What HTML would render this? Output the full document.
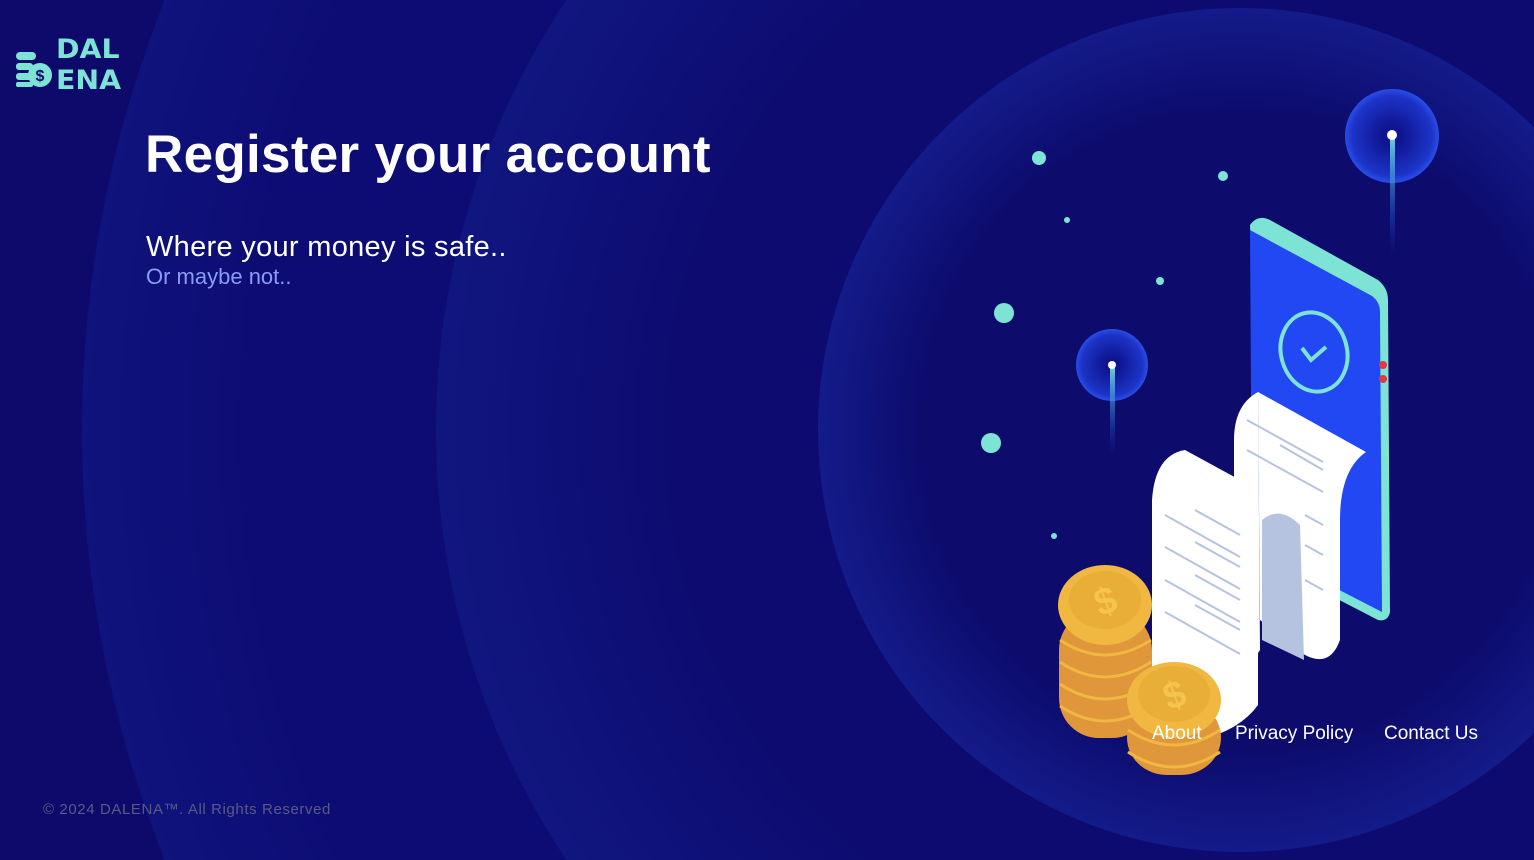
<!DOCTYPE html>
<html><head><meta charset="utf-8"><style>
html,body{margin:0;padding:0;width:1534px;height:860px;overflow:hidden;background:#0d0a6c;font-family:"Liberation Sans",sans-serif}
.a{position:absolute;white-space:nowrap}
</style></head><body>
<svg class="a" style="left:0;top:0" width="1534" height="860">
<defs>
<radialGradient id="g1" cx="1240" cy="430" r="1160" gradientUnits="userSpaceOnUse"><stop offset="0.85" stop-color="#0d0c74"/><stop offset="1" stop-color="#0f137c"/></radialGradient>
<radialGradient id="g2" cx="1220" cy="430" r="785" gradientUnits="userSpaceOnUse"><stop offset="0.7" stop-color="#0d0b70"/><stop offset="1" stop-color="#101680"/></radialGradient>
<radialGradient id="g3" cx="1240" cy="430" r="422" gradientUnits="userSpaceOnUse"><stop offset="0.75" stop-color="#0d0b6c"/><stop offset="1" stop-color="#131b8a"/></radialGradient>
<radialGradient id="gl" cx="0.5" cy="0.5" r="0.5"><stop offset="0.2" stop-color="#0f1590"/><stop offset="0.85" stop-color="#1c34c8"/><stop offset="1" stop-color="#2a4ee8"/></radialGradient>
<linearGradient id="bm" x1="0" y1="0" x2="0" y2="1"><stop offset="0" stop-color="#6fd0e8"/><stop offset="1" stop-color="#1a3ad0" stop-opacity="0"/></linearGradient>
</defs>
<circle cx="1240" cy="430" r="1158" fill="url(#g1)"/>
<circle cx="1210" cy="430" r="774" fill="url(#g2)"/>
<circle cx="1240" cy="430" r="422" fill="url(#g3)"/>
<g fill="#7de3d4"><circle cx="1039" cy="158" r="7"/><circle cx="1223" cy="176" r="5"/><circle cx="1067" cy="220" r="3"/><circle cx="1160" cy="281" r="4"/><circle cx="1004" cy="313" r="10"/><circle cx="991" cy="443" r="10"/><circle cx="1054" cy="536" r="3"/></g>
<circle cx="1392" cy="136" r="47" fill="url(#gl)"/>
<rect x="1390" y="136" width="5" height="120" fill="url(#bm)"/><circle cx="1392" cy="135" r="5" fill="#fff"/>
<circle cx="1112" cy="365" r="36" fill="url(#gl)"/>
<rect x="1110" y="366" width="5" height="90" fill="url(#bm)"/><circle cx="1112" cy="365" r="4" fill="#fff"/>
<path d="M1250 225 Q1258 214 1270 220 L1378 280 Q1388 288 1388 300 L1390 612 Q1388 622 1378 620 L1262 560 Z" fill="#7de3d4"/>
<path d="M1250 230 L1372 296 Q1380 302 1380 312 L1382 612 L1252 545 Z" fill="#2248f4"/>
<circle cx="1383" cy="365" r="4" fill="#e03a3a"/><circle cx="1383" cy="379" r="4" fill="#e03a3a"/>
<ellipse cx="1314" cy="352" rx="33" ry="40" transform="rotate(-15 1314 352)" fill="none" stroke="#7de3d4" stroke-width="4"/>
<path d="M1302 348 L1311 360 L1326 347" fill="none" stroke="#7de3d4" stroke-width="4"/>
<path d="M1258 392 L1366 452 Q1340 470 1340 520 L1340 640 Q1330 668 1305 655 L1260 620 Z" fill="#fff"/>
<path d="M1258 392 Q1234 405 1234 440 L1234 690 L1260 650 Z" fill="#fff"/>
<path d="M1262 520 Q1280 505 1300 525 L1304 660 L1262 640 Z" fill="#b6c3e0"/>
<path d="M1185 450 L1240 480 L1258 520 L1258 705 Q1240 730 1200 740 L1152 720 L1152 500 Q1155 455 1185 450 Z" fill="#fff"/>
<g stroke="#b6c3e0" stroke-width="2">
<line x1="1165" y1="515" x2="1240" y2="557"/><line x1="1195" y1="510" x2="1240" y2="535"/>
<line x1="1165" y1="547" x2="1240" y2="589"/><line x1="1195" y1="542" x2="1240" y2="567"/>
<line x1="1165" y1="580" x2="1240" y2="622"/><line x1="1195" y1="575" x2="1240" y2="600"/>
<line x1="1165" y1="612" x2="1240" y2="654"/><line x1="1195" y1="605" x2="1240" y2="630"/>
<line x1="1247" y1="420" x2="1323" y2="462"/><line x1="1280" y1="445" x2="1323" y2="470"/>
<line x1="1247" y1="450" x2="1323" y2="492"/><line x1="1305" y1="515" x2="1323" y2="525"/>
<line x1="1305" y1="545" x2="1323" y2="555"/><line x1="1305" y1="580" x2="1323" y2="590"/>
</g>
<g>
<rect x="1059" y="610" width="93" height="128" rx="40" fill="#e0963a"/>
<g fill="none" stroke="#f0b840" stroke-width="3"><path d="M1060 640 Q1105 670 1151 640"/><path d="M1060 662 Q1105 692 1151 662"/><path d="M1060 684 Q1105 714 1151 684"/><path d="M1060 706 Q1105 736 1151 706"/></g>
<ellipse cx="1105" cy="605" rx="47" ry="40" fill="#f0b840"/><ellipse cx="1105" cy="600" rx="36" ry="29" fill="#e8ae38"/>
<text x="1105" y="614" font-size="38" font-weight="bold" fill="#f4c44c" text-anchor="middle" transform="rotate(-20 1105 600)">$</text>
<rect x="1127" y="700" width="94" height="75" rx="40" fill="#e0963a"/>
<g fill="none" stroke="#f0b840" stroke-width="3"><path d="M1128 730 Q1174 760 1220 730"/><path d="M1128 752 Q1174 782 1220 752"/></g>
<ellipse cx="1174" cy="700" rx="47" ry="38" fill="#f0b840"/><ellipse cx="1174" cy="694" rx="36" ry="28" fill="#e8ae38"/>
<text x="1174" y="708" font-size="38" font-weight="bold" fill="#f4c44c" text-anchor="middle" transform="rotate(-20 1174 694)">$</text>
</g>
<g fill="#7de3d4"><rect x="16" y="52" width="20" height="8" rx="4"/><rect x="16" y="63" width="17" height="7" rx="3"/><rect x="16" y="73" width="17" height="7" rx="3"/><rect x="16" y="82" width="17" height="5" rx="2"/><circle cx="40" cy="75" r="12"/></g>
<text x="40" y="81" font-size="16" font-weight="bold" fill="#0d0a6c" text-anchor="middle">$</text>
</svg>
<div class="a" style="left:56px;top:34px;color:#7de3d4;font-weight:bold;font-size:27px;line-height:31px;letter-spacing:0px;font-family:'DejaVu Sans',sans-serif;transform:scaleX(1.05);transform-origin:left">DAL<br>ENA</div>
<div class="a" style="left:145px;top:124px;color:#fff;font-weight:bold;font-size:53px;letter-spacing:0.3px">Register your account</div>
<div class="a" style="left:146px;top:231px;color:#fff;font-size:29px;letter-spacing:0.3px">Where your money is safe..</div>
<div class="a" style="left:146px;top:264px;color:#8a9cf4;font-size:22px">Or maybe not..</div>
<div class="a" style="left:1152px;top:723px;color:#fff;font-size:19px">About</div>
<div class="a" style="left:1235px;top:723px;color:#fff;font-size:19px">Privacy Policy</div>
<div class="a" style="left:1384px;top:723px;color:#fff;font-size:19px">Contact Us</div>
<div class="a" style="left:43px;top:801px;color:#5a5a86;font-size:15px;letter-spacing:0.6px">© 2024 DALENA™. All Rights Reserved</div>
</body></html>
